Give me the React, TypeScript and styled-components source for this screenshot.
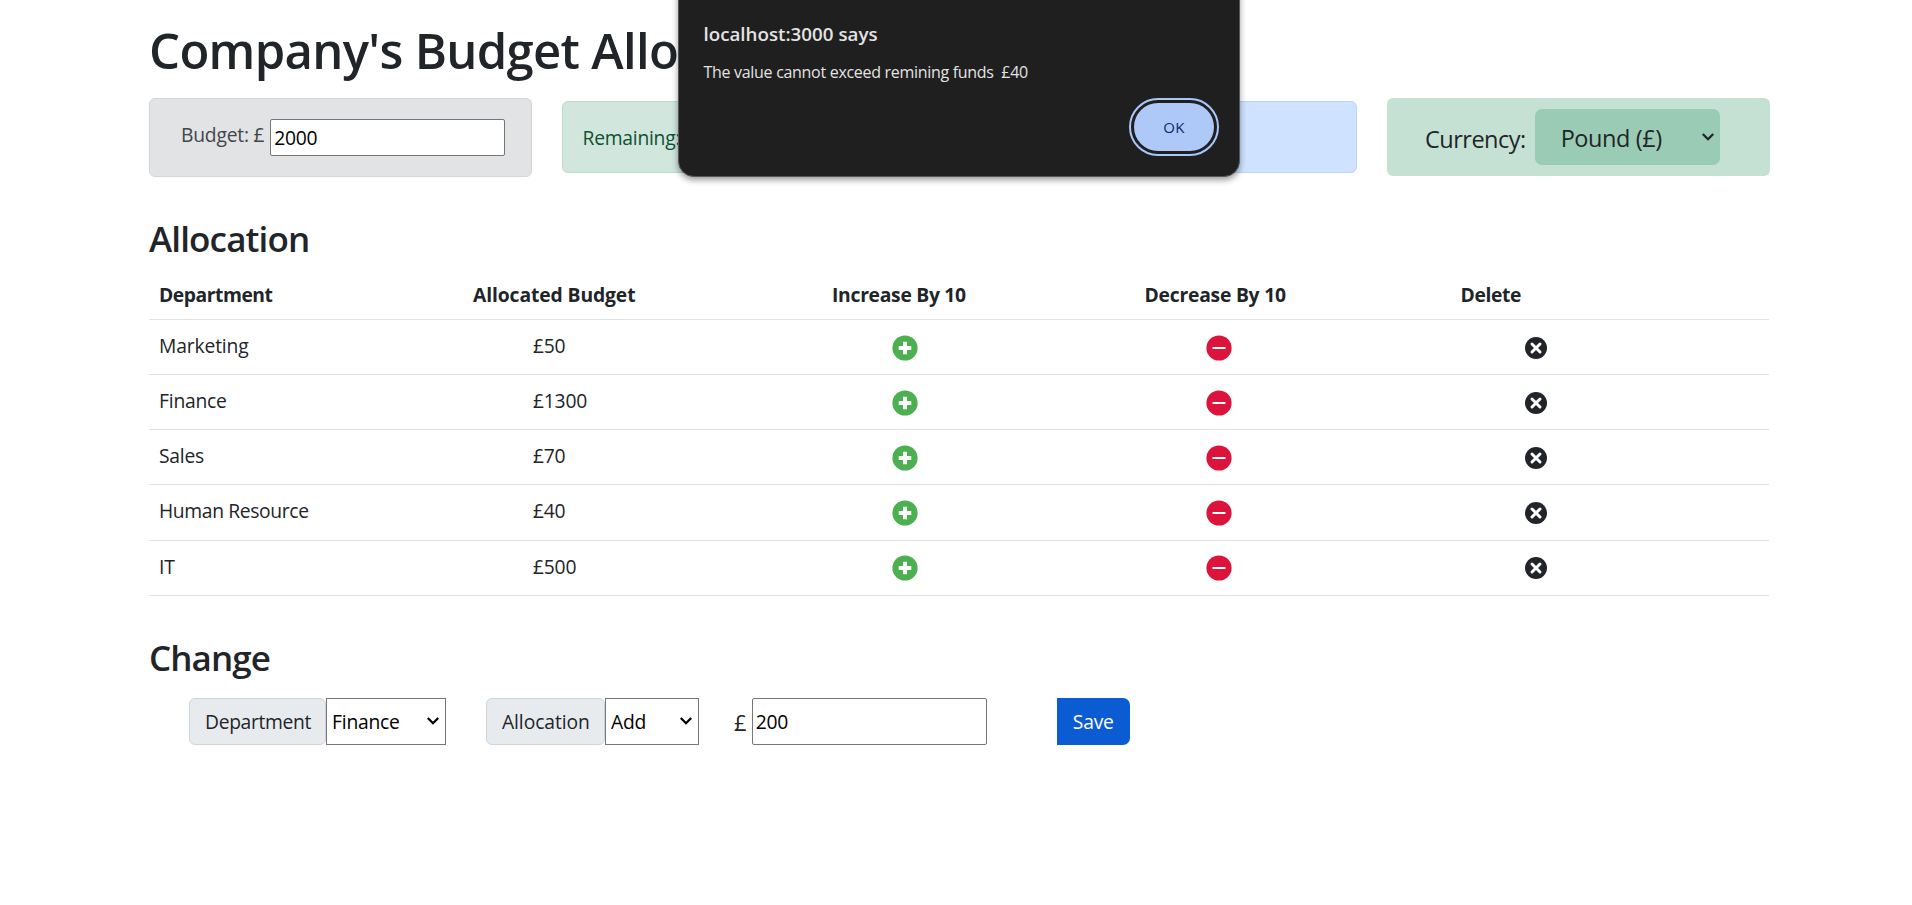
import React from "react";
import styled, { createGlobalStyle } from "styled-components";

const Global = createGlobalStyle`
  *, *::before, *::after { box-sizing: border-box; }
  body { margin: 0; background: #fff; color: #212529; font-family: "Open Sans", "Noto Sans", sans-serif; font-size: 19.3px; line-height: 30px; overflow: hidden; }
`;

const Text = styled.span<{ $size?: number; $spacing?: number; $weight?: number }>`
  display: inline-block;
  vertical-align: top;
  white-space: pre;
  font-size: ${(p) => p.$size ?? 19.3}px;
  letter-spacing: ${(p) => p.$spacing ?? -0.22}px;
  font-weight: ${(p) => p.$weight ?? 400};
`;
const Page = styled.main`width: 1620px; margin: 0 0 0 149px; padding-top: 19px;`;
const Title = styled.h1`margin: 0; height: 79px; line-height: 62px;`;
const Heading = styled.h3`margin: 40px 0 0; height: 42px; line-height: 44px;`;

const Cards = styled.section`display: grid; grid-template-columns: repeat(4, 383px); column-gap: 29.5px; height: 79px;`;
const Card = styled.div<{ $bg: string; $line: string; $fg: string }>`
  display: flex;
  height: 72px;
  margin-top: 3px;
  padding: 21px 20px 0;
  border: 1px solid ${(p) => p.$line};
  border-radius: 6px;
  background: ${(p) => p.$bg};
  color: ${(p) => p.$fg};
`;
const BudgetCard = styled(Card)`height: 79px; margin-top: 0; padding: 20px 0 0 31px; gap: 6px;`;
const BudgetLabel = styled.label`line-height: 32px;`;
const CurrencyCard = styled(Card)`height: 78px; margin-top: 0; padding: 10px 0 0 38.5px; border: 0; gap: 9.4px;`;
const CurrencyLabel = styled.label`line-height: 58px; margin-top: 2px;`;
const CurrencySelect = styled.div`
  display: flex; justify-content: space-between; align-items: center;
  width: 185px; height: 56px; margin-top: 1px; padding: 2px 5px 0 25.5px; border-radius: 7px; background: #9acbb5;
  line-height: 57px;
`;
const Field = styled.div<{ $h: number }>`
  width: 235px; height: ${(p) => p.$h}px; padding-left: 2.8px;
  border: 1px solid #767676; border-radius: 2px; background: #fff; color: #000;
  line-height: ${(p) => p.$h - 2}px;
`;

const Table = styled.div`margin-top: 9px;`;
const Row = styled.div`
  display: grid; grid-template-columns: 314px 359px 312.5px 316px 1fr;
  height: 55.2px; padding-top: 11px; border-bottom: 1px solid #dee2e6;
`;
const HeadRow = styled(Row)`height: 51.8px; padding-top: 11.5px;`;
const Cell = styled.div<{ $indent?: number }>`padding-left: ${(p) => 10 + (p.$indent ?? 0)}px; height: 34px;`;
const Icon = styled.svg`display: block; margin-top: 3.8px;`;

const Controls = styled.section`display: flex; margin-top: 20px; padding-left: 40px; height: 47px;`;
const Addon = styled.label<{ $w: number }>`
  width: ${(p) => p.$w}px; padding-left: 15px; border: 1px solid #ced4da; border-radius: 6px; background: #e8ebee; line-height: 46px;
`;
const Select = styled.div<{ $w: number }>`
  display: flex; justify-content: space-between; align-items: center;
  width: ${(p) => p.$w}px; padding: 2px 5px 0 5px; border: 1px solid #767676; background: #fff; color: #000;
`;
const Pound = styled.span`margin: 0 5.5px 0 35px; line-height: 48px;`;
const Save = styled.button`
  width: 73px; margin-left: 70px; padding: 0 0 0 16px; border: 0; border-radius: 0 7px 7px 0;
  background: #0b5cd3; color: #fff; font: inherit; text-align: left; line-height: 48px;
`;
const Gap = styled.div`width: 40px;`;

const Dialog = styled.div`
  position: absolute; top: -20px; left: 678px; width: 562px; height: 196.5px;
  padding: 40px 20px 0 24.5px; border: 1px solid #55575a; border-radius: 16px; background: #1f1f1f; color: #e3e3e3;
  box-shadow: 0 3px 6px rgba(0, 0, 0, 0.4);
`;
const DialogTitle = styled.div`height: 26px; line-height: 26px;`;
const DialogText = styled.div`height: 24px; line-height: 26px; margin-top: 12px;`;
const OkRing = styled.div`
  width: 90px; height: 58px; margin: 15px 0 0 auto; padding: 3px;
  border: 2px solid #a8c7fa; border-radius: 29px;
`;
const Ok = styled.button`
  display: block; width: 100%; height: 100%; padding: 0; border: 0; border-radius: 25px;
  background: #aec9f7; color: #062e6f; font: inherit; line-height: 48px;
`;

const Chevron = () => (
  <svg width="14" height="14" viewBox="0 0 14 14" fill="none" stroke="currentColor" strokeWidth="2.3">
    <path d="M1.8 3 L7 8.2 L12.2 3" />
  </svg>
);
const Plus = () => (
  <Icon width="26" height="26" viewBox="0 0 26 26">
    <circle cx="13" cy="13" r="12.6" fill="#4caf50" />
    <path d="M11 6.7h4V11h4.3v4H15v4.3h-4V15H6.7v-4H11z" fill="#fff" />
  </Icon>
);
const Minus = () => (
  <Icon width="26" height="26" viewBox="0 0 26 26">
    <circle cx="13" cy="13" r="12.6" fill="#dc143c" />
    <rect x="6.5" y="12" width="13" height="2" rx="0.5" fill="#fff" />
  </Icon>
);
const Cross = () => (
  <Icon width="24" height="26" viewBox="0 0 24 26">
    <circle cx="12" cy="13" r="11" fill="#212529" />
    <path d="M8 9l8 8M16 9l-8 8" stroke="#fff" strokeWidth="3" strokeLinecap="round" />
  </Icon>
);

const columns = [
  { label: "Department", spacing: -0.45 },
  { label: "Allocated Budget", spacing: -0.1 },
  { label: "Increase By 10", spacing: -0.28 },
  { label: "Decrease By 10", spacing: -0.22 },
  { label: "Delete", spacing: -0.35 },
];
const rows = [
  { name: "Marketing", value: "£50", spacing: -0.15 },
  { name: "Finance", value: "£1300" },
  { name: "Sales", value: "£70" },
  { name: "Human Resource", value: "£40", spacing: -0.36 },
  { name: "IT", value: "£500" },
];

export default function App() {
  return (
    <>
      <Global />
      <Page>
        <Title><Text $size={49} $weight={600} $spacing={-0.68}>Company's Budget Allo</Text></Title>
        <Cards>
          <BudgetCard $bg="#e2e3e5" $line="#d3d6d8" $fg="#41464b">
            <BudgetLabel><Text>Budget: £</Text></BudgetLabel>
            <Field $h={37}><Text>2000</Text></Field>
          </BudgetCard>
          <Card $bg="#d1e7dd" $line="#badbcc" $fg="#0f5132"><Text $spacing={-0.25}>Remaining:</Text></Card>
          <Card $bg="#cfe2ff" $line="#b6d4fe" $fg="#084298" />
          <CurrencyCard $bg="#c5e1d3" $line="" $fg="#212529">
            <CurrencyLabel><Text $size={23.5} $spacing={-0.5}>Currency:</Text></CurrencyLabel>
            <CurrencySelect><Text $size={23.5} $spacing={-0.42}>Pound (£)</Text><Chevron /></CurrencySelect>
          </CurrencyCard>
        </Cards>
        <Heading><Text $size={35} $weight={600} $spacing={-0.85}>Allocation</Text></Heading>
        <Table>
          <HeadRow>
            {columns.map((c) => (
              <Cell key={c.label}><Text $weight={700} $spacing={c.spacing}>{c.label}</Text></Cell>
            ))}
          </HeadRow>
          {rows.map((r) => (
            <Row key={r.name}>
              <Cell><Text $spacing={r.spacing}>{r.name}</Text></Cell>
              <Cell $indent={60}><Text>{r.value}</Text></Cell>
              <Cell $indent={60.2}><Plus /></Cell>
              <Cell $indent={61}><Minus /></Cell>
              <Cell $indent={63.5}><Cross /></Cell>
            </Row>
          ))}
        </Table>
        <Heading><Text $size={35} $weight={600} $spacing={-0.9}>Change</Text></Heading>
        <Controls>
          <Addon $w={137}><Text $spacing={-0.33}>Department</Text></Addon>
          <Select $w={120}><Text>Finance</Text><Chevron /></Select>
          <Gap />
          <Addon $w={119}><Text $spacing={-0.1}>Allocation</Text></Addon>
          <Select $w={94}><Text>Add</Text><Chevron /></Select>
          <Pound><Text $size={22}>£</Text></Pound>
          <Field $h={47}><Text>200</Text></Field>
          <Save><Text>Save</Text></Save>
        </Controls>
      </Page>
      <Dialog role="dialog">
        <DialogTitle><Text $size={18.75} $weight={600} $spacing={0}>localhost:3000 says</Text></DialogTitle>
        <DialogText><Text $size={16} $spacing={-0.3}>The value cannot exceed remining funds  £40</Text></DialogText>
        <OkRing><Ok><Text $size={15} $spacing={0.2}>OK</Text></Ok></OkRing>
      </Dialog>
    </>
  );
}
